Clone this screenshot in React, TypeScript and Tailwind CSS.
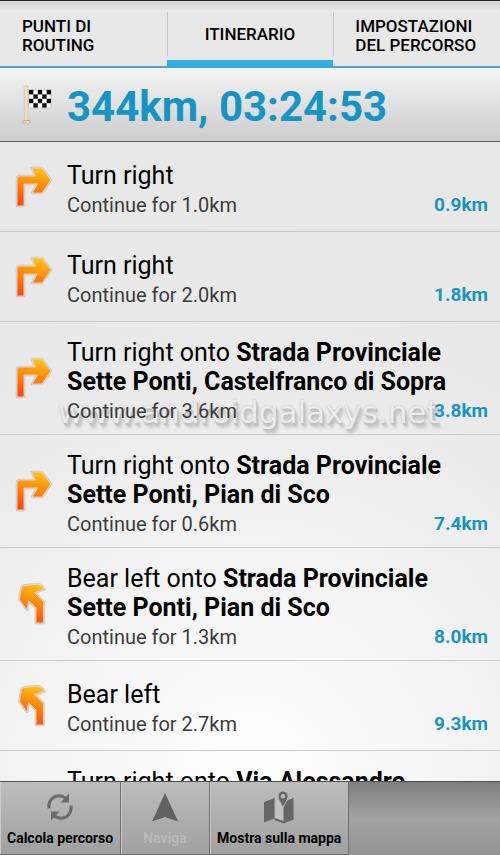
import { useId, useState } from "react"
import type { ReactNode } from "react"

type Direction = "right" | "bearLeft"

type Step = {
    direction: Direction
    action: string
    road?: string
    next: string
    distance: string
    stamp?: string
}

const tabs = ["PUNTI DI ROUTING", "ITINERARIO", "IMPOSTAZIONI DEL PERCORSO"]

const steps: Step[] = [
    { direction: "right", action: "Turn right", next: "1.0km", distance: "0.9km" },
    { direction: "right", action: "Turn right", next: "2.0km", distance: "1.8km" },
    {
        direction: "right",
        action: "Turn right onto",
        road: "Strada Provinciale Sette Ponti, Castelfranco di Sopra",
        next: "3.6km",
        distance: "3.8km",
        stamp: "www.androidgalaxys.net",
    },
    {
        direction: "right",
        action: "Turn right onto",
        road: "Strada Provinciale Sette Ponti, Pian di Sco",
        next: "0.6km",
        distance: "7.4km",
    },
    {
        direction: "bearLeft",
        action: "Bear left onto",
        road: "Strada Provinciale Sette Ponti, Pian di Sco",
        next: "1.3km",
        distance: "8.0km",
    },
    { direction: "bearLeft", action: "Bear left", next: "2.7km", distance: "9.3km" },
]

const arrows: Record<Direction, string> = {
    right: "M3 42V15Q3 12 6 12H21.5L17.5 4H28L37 16L28 29H18L23.5 20H10V42Z",
    bearLeft: "M22 42V27L14.5 19.5L13 29L5.5 18.5L7.5 6.5Q8 5 10 4.5L24 3Q27 3 30.5 8.5L20.5 11.5L29.5 20.5V42Z",
}

function DirectionIcon({ direction }: { direction: Direction }) {
    const id = useId()
    return (
        <svg viewBox="0 0 40 46" className="h-[46px] w-10 shrink-0" aria-hidden="true">
            <defs>
                <linearGradient id={id} x1="0.6" y1="0" x2="0.4" y2="1">
                    <stop offset="0" stopColor="#fbc21c" />
                    <stop offset="0.35" stopColor="#fd960a" />
                    <stop offset="1" stopColor="#fc4a12" />
                </linearGradient>
            </defs>
            <path d={arrows[direction]} fill="none" stroke="#c8c8cc" strokeWidth="2.6" strokeLinejoin="round" />
            <path d={arrows[direction]} fill={`url(#${id})`} stroke="#f3dcc8" strokeWidth="0.8" strokeLinejoin="round" />
        </svg>
    )
}

function FlagIcon() {
    const squares = []
    for (let row = 0; row < 4; row++) {
        for (let col = 0; col < 5; col++) {
            if ((row + col) % 2 === 0) {
                squares.push(
                    <rect key={`${row}-${col}`} x={8 + col * 4.4} y={6 + row * 4.4} width="4.4" height="4.4" fill="#0c0c0c" />
                )
            }
        }
    }
    return (
        <svg viewBox="0 0 32 42" className="h-[42px] w-8 shrink-0" aria-hidden="true">
            <rect x="7.5" y="5.5" width="22.5" height="18.5" fill="#fff" stroke="#b9b9b9" strokeWidth="0.7" />
            {squares}
            <path d="M3 2.5Q5 .5 7 2.5V37H3.5Z" fill="#e9dfc9" stroke="#cdbfa6" strokeWidth="0.7" />
            <path d="M4.5 36.5Q1 36 1.2 38.5Q2.5 40.5 5.2 38.8Q8 40.5 9.2 38.3Q9 36 6 36.5Z" fill="#eadfd2" stroke="#b59f8c" strokeWidth="0.8" />
        </svg>
    )
}

function RefreshIcon() {
    return (
        <svg viewBox="0 0 28 30" className="h-[30px] w-7" aria-hidden="true">
            <g fill="none" stroke="#6b6b6b" strokeWidth="3">
                <path d="M3 16.5C2 10 6 4.5 12 3.7C15.5 3.3 18 4.5 20.5 7" />
                <path d="M25 13.5C26 20 22 25.5 16 26.3C12.5 26.7 10 25.5 7.5 23" />
            </g>
            <path d="M23 1.5V10.5H14.5Z" fill="#6b6b6b" />
            <path d="M5 28.5V19.5H13.5Z" fill="#6b6b6b" />
        </svg>
    )
}

function NavigateIcon() {
    return (
        <svg viewBox="0 0 28 30" className="h-[30px] w-7" aria-hidden="true">
            <path d="M14 1L27 29.5L14 25L1 29.5Z" fill="#626262" />
        </svg>
    )
}

function MapIcon() {
    return (
        <svg viewBox="0 0 32 34" className="h-[34px] w-8" aria-hidden="true">
            <path d="M1 12L11.5 8V28.5L1 32.5Z" fill="#666" />
            <path d="M12.5 8L20.5 11.5V31L12.5 28Z" fill="#c2c2c2" />
            <path d="M11.5 28L20.5 31L30.5 27.5V29.5L20.5 33.5L11.5 30Z" fill="#666" />
            <path d="M20.5 12L30.5 8V28.5L20.5 32.5Z" fill="#666" />
            <path
                d="M20 1a5 5 0 0 1 5 5.2C25 10 21.8 13 20 17.5C18.200 13 15 10 15 6.200A5 5 0 0 1 20 1Z"
                fill="#666"
                stroke="#b8b8b8"
                strokeWidth="1"
            />
            <circle cx="20" cy="6.3" r="2.2" fill="#bbb" />
        </svg>
    )
}

function StepTitle({ action, road }: { action: string; road?: string }) {
    return (
        <p className="text-[25px] leading-[29px] text-black">
            {action} {road && <span className="font-bold">{road}</span>}
        </p>
    )
}

function StepRow({ step }: { step: Step }) {
    return (
        <li className="relative isolate flex min-h-[90px] shrink-0 items-center border-b border-[#cbcbcb] pr-3 pl-[14px]">
            {step.stamp && (
                <span className="absolute bottom-1 left-[58px] -z-10 font-['DejaVu_Sans',sans-serif] text-[31px] leading-9 whitespace-nowrap text-[#ececec] [text-shadow:0_0_2px_#bababa,1px_2px_1px_#c2c2c2,2px_3px_2px_#c2c2c2,3px_5px_3px_#c8c8c8]">
                    {step.stamp}
                </span>
            )}
            <DirectionIcon direction={step.direction} />
            <div className="ml-[13px] min-w-0 flex-1 pt-4 pb-[11px]">
                <StepTitle action={step.action} road={step.road} />
                <div className="mt-[3px] flex items-center justify-between text-[20px] leading-6">
                    <span className="text-[#3c3c3c]">Continue for {step.next}</span>
                    <span className="text-[19px] font-bold text-[#1b95bf]">{step.distance}</span>
                </div>
            </div>
        </li>
    )
}

function ToolButton({ icon, label, disabled }: { icon: ReactNode; label: string; disabled?: boolean }) {
    return (
        <button
            type="button"
            disabled={disabled}
            className="flex h-full min-w-[89px] flex-col items-center border-r border-b border-r-[#707070] border-b-[#707070] bg-linear-to-b from-[#bdbdbd] to-[#a0a0a0] px-[7px] text-[14px] leading-5 font-bold text-black shadow-[inset_1px_0_0_#cacaca] disabled:text-[#b9b9b9]"
        >
            <span className="flex h-[46px] items-center pt-1">{icon}</span>
            <span>{label}</span>
        </button>
    )
}

export default function App() {
    const [active, setActive] = useState(1)

    return (
        <main className="flex h-screen flex-col overflow-hidden bg-[#e8e8e8] font-[Roboto,sans-serif]">
            <nav className="grid h-[68px] shrink-0 grid-cols-3 border-t border-[#222] bg-linear-to-b from-[#d4d4d4] via-[#e8e8e8] via-15% to-[#e8e8e8]">
                {tabs.map((tab, i) => (
                    <button
                        key={tab}
                        type="button"
                        onClick={() => setActive(i)}
                        className={`relative flex items-center px-[22px] text-left text-[17px] leading-[19px] font-medium text-black ${
                            i === active
                                ? "justify-center border-b-8 border-[#33b0e0] pt-2"
                                : "border-b-2 border-[#4aa5d0] pt-1"
                        }`}
                    >
                        {tab}
                        {i > 0 && <span className="absolute top-[11px] left-0 h-11 w-px bg-[#c6c6c6]" />}
                    </button>
                ))}
            </nav>

            <header className="flex h-[74px] shrink-0 items-center border-b border-[#5a5a5a] bg-linear-to-b from-[#f4f4f4] to-[#cdcdcd] pl-[21px]">
                <FlagIcon />
                <h1 className="ml-[14px] pt-1 text-[42px] leading-[50px] font-bold text-[#1794c4]">344km, 03:24:53</h1>
            </header>

            <ul className="flex min-h-0 flex-1 flex-col overflow-hidden bg-[radial-gradient(circle_at_50%_100%,#ffffff_0%,#f6f6f6_25%,#eaeaea_60%,#e7e7e7_100%)]">
                {steps.map((step, i) => (
                    <StepRow key={i} step={step} />
                ))}
                {/* next step, only its first line is in view */}
                <li className="shrink-0 pt-4 pl-[67px]">
                    <StepTitle action="Turn right onto" road="Via Alessandro" />
                </li>
            </ul>

            <footer className="flex h-[74px] shrink-0 border-t border-[#505050] bg-linear-to-b from-[#7e7e7e] via-[#a2a2a2] to-[#949494]">
                <ToolButton icon={<RefreshIcon />} label="Calcola percorso" />
                <ToolButton icon={<NavigateIcon />} label="Naviga" disabled />
                <ToolButton icon={<MapIcon />} label="Mostra sulla mappa" />
            </footer>
        </main>
    )
}
